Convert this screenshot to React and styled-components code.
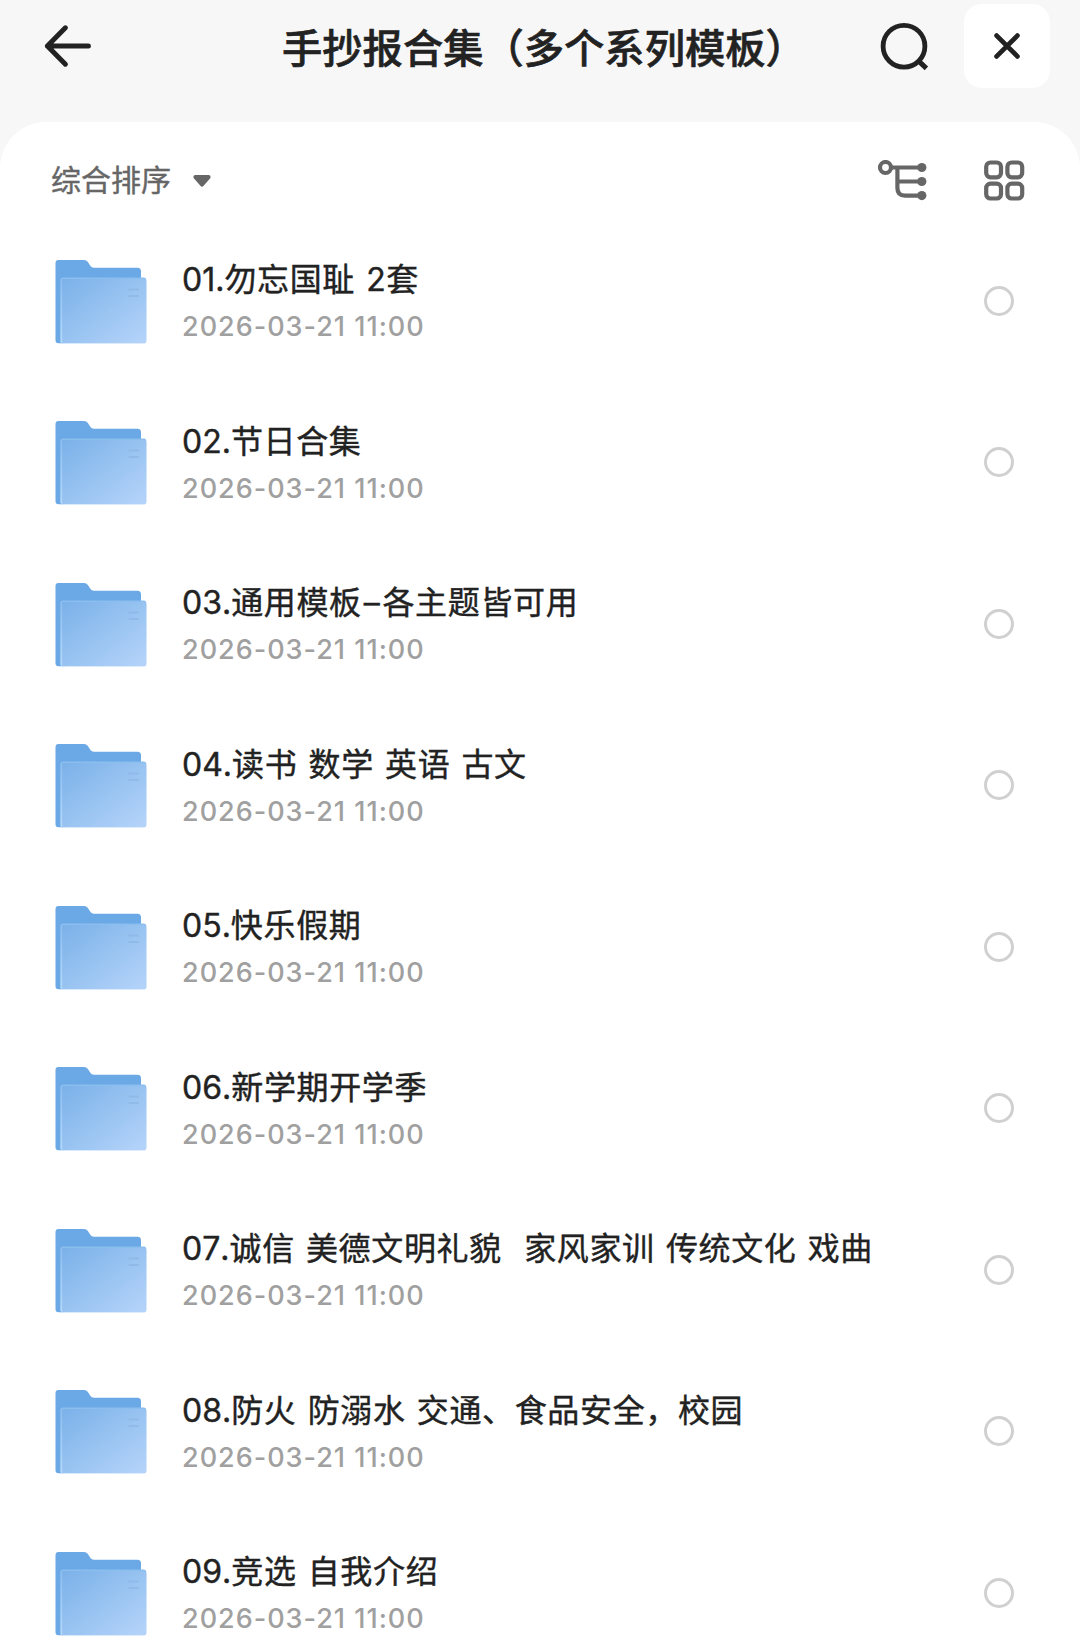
import styled, { createGlobalStyle } from 'styled-components';

const GlobalStyle = createGlobalStyle`
  * {
    box-sizing: border-box;
  }

  body {
    margin: 0;
    background: #f7f7f7;
    font-family: Inter, 'Noto Sans CJK SC', sans-serif;
    color: #222;
  }

  button {
    padding: 0;
    border: 0;
    background: none;
    color: inherit;
    font: inherit;
  }

  svg {
    display: block;
  }
`;

const Page = styled.main`
  display: flex;
  flex-direction: column;
  width: 1080px;
  height: 1648px;
  overflow: hidden;
`;

const Header = styled.header`
  display: flex;
  flex: none;
  align-items: center;
  height: 122px;
  padding: 0 30px 30px 43px;
`;

const Title = styled.h1`
  flex: 1;
  margin: 0 0 0 191px;
  font-size: 40.3px;
  font-weight: 500;
  line-height: 56px;
  white-space: nowrap;
  font-family: 'Noto Sans CJK SC', sans-serif;
  -webkit-text-stroke: 0.6px #222;
`;

const IconButton = styled.button`
  flex: none;
`;

const CloseButton = styled.button`
  display: flex;
  flex: none;
  align-items: center;
  justify-content: center;
  width: 86px;
  height: 84px;
  margin-left: 35px;
  border-radius: 18px;
  background: #fff;
`;

const Panel = styled.section`
  flex: 1;
  min-height: 0;
  border-radius: 46px 46px 0 0;
  background: #fff;
`;

const Toolbar = styled.div`
  display: flex;
  align-items: center;
  height: 99px;
  padding: 18px 55px 0 51px;
  color: #666;
`;

const SortButton = styled.button`
  display: flex;
  align-items: center;
  gap: 22px;
  margin-right: auto;
`;

const SortLabel = styled.span`
  padding-bottom: 6px;
  font-family: 'Noto Sans CJK SC', sans-serif;
  font-size: 30px;
  line-height: 44px;
  -webkit-text-stroke: 0.4px #666;
`;

const ViewButtons = styled.div`
  display: flex;
  gap: 57px;
`;

const List = styled.ul`
  margin: 0;
  padding: 0;
  list-style: none;
`;

const Row = styled.li`
  display: flex;
  align-items: center;
  height: 161.5px;
  padding: 0 66px 0 55px;
`;

const Info = styled.div`
  flex: 1;
  padding-top: 2px;
  margin-left: 35px;
`;

const Name = styled.div`
  font-size: 32px;
  line-height: 48px;
  letter-spacing: 0.65px;
  word-spacing: 1.5px;
  white-space: pre;
  -webkit-text-stroke: 0.4px #222;
`;

const Index = styled.span`
  letter-spacing: 0;
  font-kerning: none;
`;

const Dash = styled.span`
  margin: 0 2px;
`;

const Time = styled.div`
  padding-top: 1px;
  font-size: 27px;
  font-weight: 500;
  line-height: 44px;
  letter-spacing: 1px;
  color: #a0a0a0;
`;

const Radio = styled.span`
  flex: none;
  width: 30px;
  height: 30px;
  margin-bottom: 2px;
  border: 3px solid #d0d0d0;
  border-radius: 50%;
`;

const BackIcon = () => (
  <svg width="48" height="44" viewBox="0 0 48 44" fill="none" stroke="#222" strokeWidth="5" strokeLinecap="round" strokeLinejoin="round">
    <path d="M22.4 3.8 4.4 22l18 18.2M4.4 22H45.4" />
  </svg>
);

const SearchIcon = () => (
  <svg width="50" height="50" viewBox="0 0 50 50" fill="none" stroke="#222" strokeWidth="4.8">
    <circle cx="25" cy="25.2" r="20.9" />
    <path d="m40 40.4 7.4 7" strokeWidth="5" />
  </svg>
);

const CloseIcon = () => (
  <svg width="28" height="28" viewBox="0 0 28 28" fill="none" stroke="#222" strokeWidth="4.8" strokeLinecap="round">
    <path d="m3.6 3.6 20.8 20.8M24.4 3.6 3.6 24.4" />
  </svg>
);

const CaretIcon = () => (
  <svg width="18" height="12" viewBox="0 0 18 12" fill="#666">
    <path d="M2.4 0h13.2c1.8 0 2.6 2 1.4 3.4l-6.4 7.4a2.1 2.1 0 0 1-3.2 0L1 3.4C-.2 2 .6 0 2.4 0Z" />
  </svg>
);

const TreeIcon = () => (
  <svg width="50" height="42" viewBox="0 0 50 42" fill="none" stroke="#666" strokeWidth="4.2">
    <circle cx="8.5" cy="7.5" r="5.5" />
    <path d="M14 7.5h31M20.4 7.5V28q0 7.6 7.6 7.6h17M20.4 21.5H45" />
    <g fill="#666" stroke="none">
      <circle cx="44.8" cy="7.5" r="4.6" />
      <circle cx="44.8" cy="21.5" r="4.6" />
      <circle cx="44.8" cy="35.6" r="4.6" />
    </g>
  </svg>
);

const GridIcon = () => (
  <svg width="41" height="42" viewBox="0 0 41 42" fill="none" stroke="#666" strokeWidth="4.2">
    <rect x="2.2" y="2.5" width="14.8" height="14.8" rx="4.2" />
    <rect x="23.4" y="2.5" width="14.8" height="14.8" rx="4.2" />
    <rect x="2.2" y="23.7" width="14.8" height="14.8" rx="4.2" />
    <rect x="23.4" y="23.7" width="14.8" height="14.8" rx="4.2" />
  </svg>
);

const FolderIcon = () => (
  <svg width="92" height="84" viewBox="0 0 92 84">
    <defs>
      <linearGradient id="folderFront" x1="0" y1="0" x2="1" y2="1">
        <stop offset="0" stopColor="#7bb1e9" />
        <stop offset="0.5" stopColor="#98c3f1" />
        <stop offset="1" stopColor="#b6d4fa" />
      </linearGradient>
      <linearGradient id="folderEdge" x1="0" y1="0" x2="0" y2="1">
        <stop offset="0" stopColor="#8bbdef" />
        <stop offset="1" stopColor="#b4d8fa" />
      </linearGradient>
    </defs>
    <path d="M3.5 0H29q2.5 0 3.9 2.1l2.6 4q1.2 1.7 3.2 1.7h43.8q3.5 0 3.5 3.5v60H8v12H3.5q-3 0-3-3v-77Q.5 0 3.5 0Z" fill="#6aa8e6" />
    <rect x="5.3" y="17.6" width="86" height="65.7" rx="2.6" fill="url(#folderEdge)" />
    <path d="M7.2 19h81.5q2.6 0 2.6 2.6v59.1q0 2.6-2.6 2.6H7.2Z" fill="url(#folderFront)" />
    <path d="M73.5 29.5H84M73.5 36H84" stroke="#8bb4e4" strokeWidth="2" opacity="0.6" />
  </svg>
);

const folders = [
  { index: '01.', name: '勿忘国耻 2套' },
  { index: '02.', name: '节日合集' },
  { index: '03.', name: <>通用模板<Dash>–</Dash>各主题皆可用</> },
  { index: '04.', name: '读书 数学 英语 古文' },
  { index: '05.', name: '快乐假期' },
  { index: '06.', name: '新学期开学季' },
  { index: '07.', name: '诚信 美德文明礼貌  家风家训 传统文化 戏曲' },
  { index: '08.', name: '防火 防溺水 交通、食品安全，校园' },
  { index: '09.', name: '竞选 自我介绍' },
];

const App = () => {
  return (
    <Page>
      <GlobalStyle />
      <Header>
        <IconButton aria-label="返回">
          <BackIcon />
        </IconButton>
        <Title>手抄报合集（多个系列模板）</Title>
        <IconButton aria-label="搜索">
          <SearchIcon />
        </IconButton>
        <CloseButton aria-label="关闭">
          <CloseIcon />
        </CloseButton>
      </Header>
      <Panel>
        <Toolbar>
          <SortButton>
            <SortLabel>综合排序</SortLabel>
            <CaretIcon />
          </SortButton>
          <ViewButtons>
            <IconButton aria-label="目录">
              <TreeIcon />
            </IconButton>
            <IconButton aria-label="宫格">
              <GridIcon />
            </IconButton>
          </ViewButtons>
        </Toolbar>
        <List>
          {folders.map(({ index, name }) => (
            <Row key={index}>
              <FolderIcon />
              <Info>
                <Name>
                  <Index>{index}</Index>
                  {name}
                </Name>
                <Time>2026-03-21 11:00</Time>
              </Info>
              <Radio />
            </Row>
          ))}
        </List>
      </Panel>
    </Page>
  );
};

export default App;
